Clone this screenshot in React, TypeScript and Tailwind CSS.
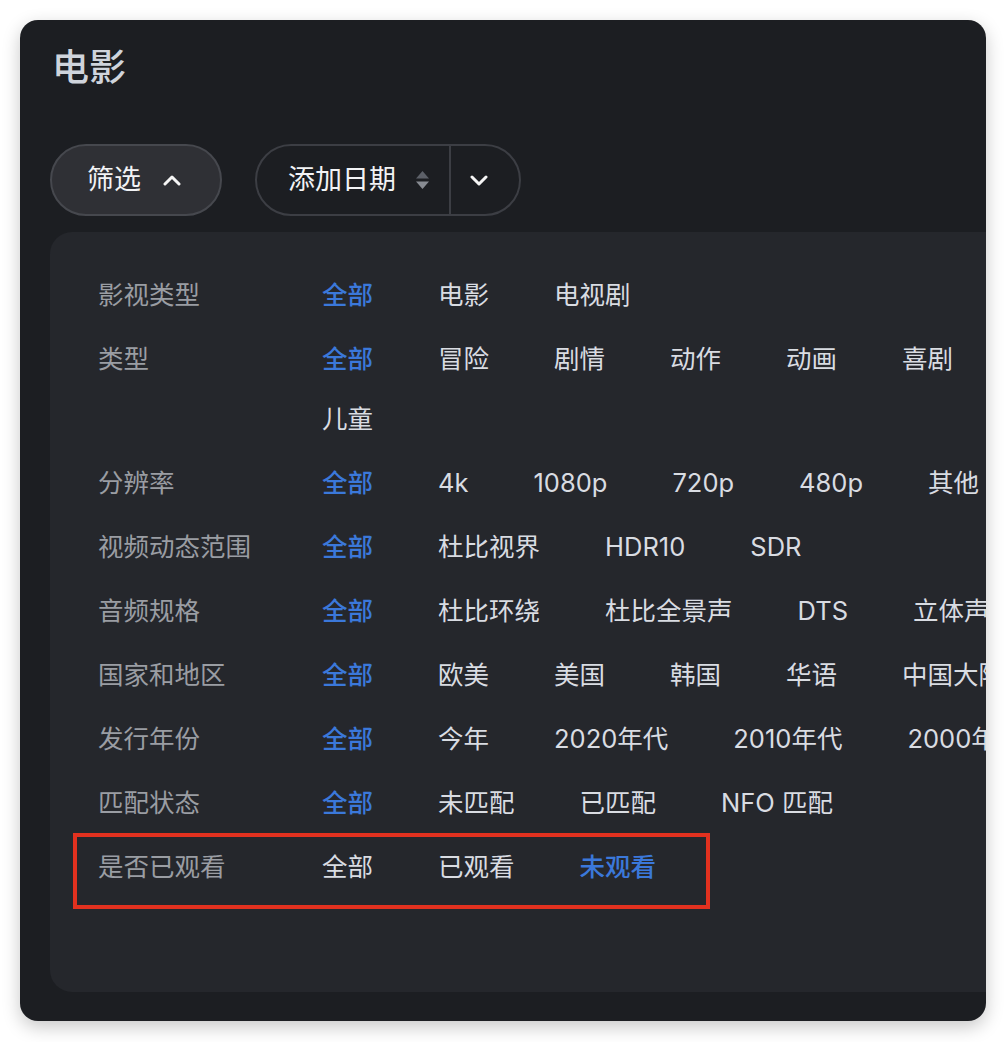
import { useState } from "react";

interface FilterRow {
  label: string;
  options: string[];
  selected: number;
}

const rows: FilterRow[] = [
  { label: "影视类型", options: ["全部", "电影", "电视剧"], selected: 0 },
  { label: "类型", options: ["全部", "冒险", "剧情", "动作", "动画", "喜剧", "儿童"], selected: 0 },
  { label: "分辨率", options: ["全部", "4k", "1080p", "720p", "480p", "其他"], selected: 0 },
  { label: "视频动态范围", options: ["全部", "杜比视界", "HDR10", "SDR"], selected: 0 },
  { label: "音频规格", options: ["全部", "杜比环绕", "杜比全景声", "DTS", "立体声"], selected: 0 },
  { label: "国家和地区", options: ["全部", "欧美", "美国", "韩国", "华语", "中国大陆"], selected: 0 },
  { label: "发行年份", options: ["全部", "今年", "2020年代", "2010年代", "2000年代"], selected: 0 },
  { label: "匹配状态", options: ["全部", "未匹配", "已匹配", "NFO 匹配"], selected: 0 },
  { label: "是否已观看", options: ["全部", "已观看", "未观看"], selected: 2 },
];

function SortIcon() {
  return (
    <svg width="15" height="20" viewBox="0 0 15 20">
      <path d="M7.5 1 L14 8.5 L1 8.5 Z" fill="#5c6068" />
      <path d="M1 11.5 L14 11.5 L7.5 19 Z" fill="#878b92" />
    </svg>
  );
}

export default function App() {
  const [selection, setSelection] = useState(rows.map((r) => r.selected));
  const [open, setOpen] = useState(true);

  return (
    <div
      className="min-h-screen bg-white p-5"
      style={{ fontFamily: 'Inter, "Noto Sans CJK SC", sans-serif' }}
    >
      <div className="w-[966px] overflow-hidden rounded-[18px] bg-[#1c1e22] pb-[29px] pl-[30px] pt-[25px] shadow-[0_6px_18px_rgba(0,0,0,0.22)]">
        <h1 className="h-[46px] pl-[2px] text-[37px] font-medium leading-[46px] text-[#cfd4dc]">电影</h1>

        <div className="mt-[53px] flex items-center gap-[33px]">
          <button
            onClick={() => setOpen((o) => !o)}
            className="flex h-[72px] w-[172px] items-center justify-center gap-[22px] rounded-full border-2 border-[#46484e] bg-[#2f3035] pr-[4px] text-[27px] text-[#f2f3f5]"
          >
            <span>筛选</span>
            <svg width="18" height="12" viewBox="0 0 18 12">
              <polyline points="2,10 9,3 16,10" fill="none" stroke="#f5f5f5" strokeWidth="3" strokeLinecap="round" strokeLinejoin="round" />
            </svg>
          </button>

          <div className="flex h-[72px] w-[266px] items-center rounded-full border-2 border-[#3c3e44] text-[27px] text-[#f2f3f5]">
            <div className="flex h-full w-[192px] items-center gap-[19px] pl-[31px]">
              <span className="whitespace-nowrap">添加日期</span>
              <SortIcon />
            </div>
            <div className="h-full w-[2px] bg-[#3c3e44]" />
            <div className="flex flex-1 items-center justify-center pr-[12px]">
              <svg width="20" height="12" viewBox="0 0 20 12">
                <polyline points="3,3 10,10 17,3" fill="none" stroke="#f5f5f5" strokeWidth="3" strokeLinecap="round" strokeLinejoin="round" />
              </svg>
            </div>
          </div>
        </div>

        {open && (
          <div className="relative mt-[16px] w-[1000px] rounded-[22px] bg-[#25272c] pb-[107px] pl-[48px] pt-[45px]">
            <div className="flex flex-col gap-[28px]">
              {rows.map((row, ri) => (
                <div key={row.label} className="flex text-[25.5px] leading-[36px]">
                  <div className="w-[224px] shrink-0 text-[#9a9da3]">{row.label}</div>
                  <div className="flex w-[720px] flex-wrap gap-x-[65px] gap-y-[24px]">
                    {row.options.map((opt, oi) => (
                      <button
                        key={opt}
                        onClick={() => setSelection((s) => s.map((v, i) => (i === ri ? oi : v)))}
                        className={
                          selection[ri] === oi
                            ? "whitespace-nowrap font-medium text-[#3b78da]"
                            : "whitespace-nowrap text-[#d9dce2]"
                        }
                      >
                        {opt}
                      </button>
                    ))}
                  </div>
                </div>
              ))}
            </div>

            <div className="pointer-events-none absolute left-[23px] top-[601px] h-[76px] w-[637px] border-4 border-[#e2311f]" />
          </div>
        )}
      </div>
    </div>
  );
}
